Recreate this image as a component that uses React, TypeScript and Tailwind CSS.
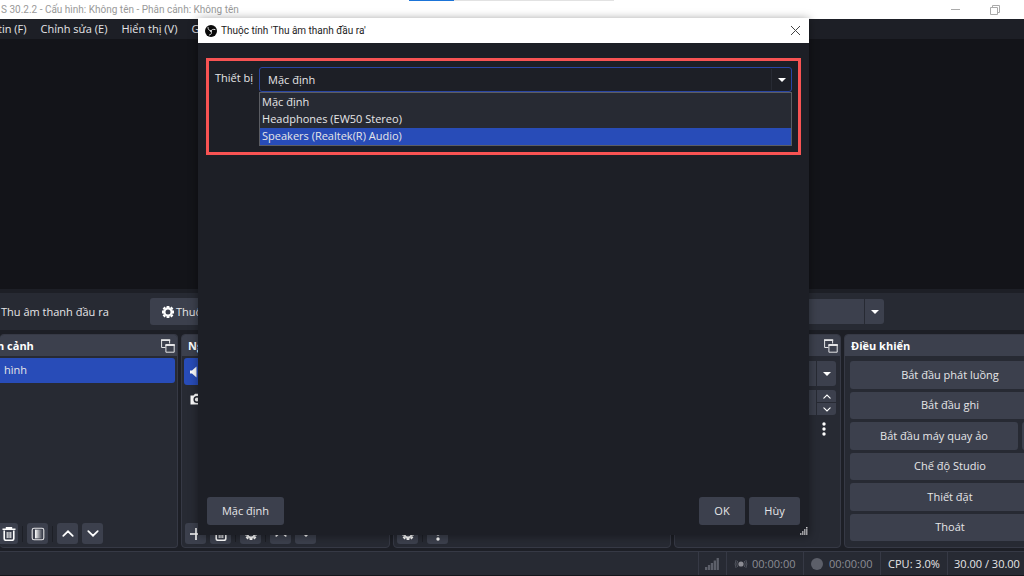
import React from 'react';
import clsx from 'clsx';

const controls = ['Bắt đầu phát luồng', 'Bắt đầu ghi', 'Bắt đầu máy quay ảo', 'Chế độ Studio', 'Thiết đặt', 'Thoát'];
const devices = ['Mặc định', 'Headphones (EW50 Stereo)', 'Speakers (Realtek(R) Audio)'];

function Triangle() {
  return (
    <svg viewBox="0 0 8 4" className="h-1 w-2 shrink-0" fill="#fff" aria-hidden="true">
      <path d="M0 0h8L4 4z" />
    </svg>
  );
}

function Gear({ className }: { className?: string }) {
  return (
    <svg viewBox="0 0 12 12" className={clsx('shrink-0', className)} fill="none" stroke="#fefefe" aria-hidden="true">
      <circle cx="6" cy="6" r="3.6" strokeWidth="2.2" />
      <g strokeWidth="2.8">
        <path d="M6 0v2M6 10v2M0 6h2M10 6h2" />
        <path d="M1.6 1.6l1.3 1.3M9.1 9.1l1.3 1.3M1.6 10.4l1.3-1.3M9.1 2.9l1.3-1.3" />
      </g>
    </svg>
  );
}

function Trash() {
  return (
    <svg viewBox="0 0 14 14" className="size-3.5" fill="none" stroke="#fefefe" aria-hidden="true">
      <path d="M.5 2.2h13M4.5 1.6V.7h5v.9" strokeWidth="1.4" />
      <path d="M2.2 3.5v8q0 1.8 1.8 1.8h6q1.8 0 1.8-1.8v-8" strokeWidth="1.6" />
      <path d="M5.2 5v6M7 5v6M8.8 5v6" strokeWidth="1" />
    </svg>
  );
}

function Filter() {
  return (
    <svg viewBox="0 0 14 14" className="size-3.5" aria-hidden="true">
      <defs>
        <linearGradient id="fade">
          <stop offset="0" stopColor="#fefefe" />
          <stop offset="1" stopColor="#3c404d" />
        </linearGradient>
      </defs>
      <rect x="1.2" y="1.2" width="11.6" height="11.6" rx="1.8" fill="none" stroke="#e4e4e6" strokeWidth="1.1" />
      <rect x="4" y="2.6" width="7.4" height="8.8" fill="url(#fade)" />
    </svg>
  );
}

function Chevron({ down, className }: { down?: boolean; className?: string }) {
  return (
    <svg viewBox="0 0 14 8" className={className} fill="none" stroke="#fefefe" strokeWidth="2" strokeLinecap="round" aria-hidden="true">
      <path d={down ? 'M1.5 1.2L7 6.6l5.5-5.4' : 'M1.5 6.8L7 1.4l5.5 5.4'} />
    </svg>
  );
}

function Plus() {
  return (
    <svg viewBox="0 0 14 14" className="size-3.5" stroke="#fefefe" strokeWidth="1.6" aria-hidden="true">
      <path d="M7 1v12M1 7h12" />
    </svg>
  );
}

function Dots() {
  return (
    <svg viewBox="0 0 4 14" className="h-3.5 w-1" fill="#fefefe" aria-hidden="true">
      <circle cx="2" cy="2" r="1.7" />
      <circle cx="2" cy="7" r="1.7" />
      <circle cx="2" cy="12" r="1.7" />
    </svg>
  );
}

function FloatIcon() {
  return (
    <svg viewBox="0 0 14 14" className="size-3.5 shrink-0" fill="none" stroke="#e4e4e6" aria-hidden="true">
      <path d="M4.5 8.500H.6V1.200h8v3.300" />
      <path d="M0 1.200h9.200" strokeWidth="1.800" />
      <path d="M4.900 6v7.200h8.300V6z" fill="#3c404d" />
      <path d="M4.400 6h9.400" strokeWidth="1.800" />
    </svg>
  );
}

function ObsLogo() {
  return (
    <svg viewBox="0 0 24 24" className="size-3 shrink-0" aria-hidden="true">
      <circle cx="12" cy="12" r="12" fill="#0a0a0a" />
      <g fill="none" stroke="#e0e0e0" strokeWidth="2" strokeLinecap="round">
        <path d="M6 5c0 4 2 6 6 7" />
        <path d="M20 9c-4-1-7 0-8 3" />
        <path d="M9 20c4-1 5-4 3-8" />
      </g>
      <circle cx="12" cy="12" r="1.8" fill="#e0e0e0" />
    </svg>
  );
}

function ToolButton({ label, children }: { label: string; children: React.ReactNode }) {
  return (
    <button type="button" aria-label={label} className="flex size-[21px] shrink-0 items-center justify-center rounded-[3px] bg-[#3c404d]">
      {children}
    </button>
  );
}

function Separator() {
  return <span className="h-4 w-px shrink-0 bg-[#1d1f26]" />;
}

interface DockProps {
  title?: string;
  floatable?: boolean;
  className?: string;
  children: React.ReactNode;
}

function Dock({ title, floatable, className, children }: DockProps) {
  return (
    <section className={clsx('flex flex-col overflow-hidden rounded-sm border border-[#363945] bg-[#272a33]', className)}>
      <header className="flex h-[21px] shrink-0 items-center justify-between bg-[#3c404d] pr-0.5">
        <h2 className="whitespace-nowrap font-bold text-white">{title}</h2>
        {floatable && <FloatIcon />}
      </header>
      {children}
    </section>
  );
}

function PropertiesDialog() {
  return (
    <div
      role="dialog"
      aria-labelledby="dialog-title"
      className="absolute top-[18px] right-[215px] bottom-[41px] left-[198px] flex flex-col bg-[#1d1f26] shadow-[0_1px_9px_rgba(0,0,0,0.4)]"
    >
      <div className="flex h-[25px] shrink-0 items-center gap-1 bg-white pr-2 pl-[7px] text-[#222]">
        <ObsLogo />
        <h1 id="dialog-title" className="flex-1 font-['Roboto','Open_Sans',sans-serif] text-[10px]">Thuộc tính 'Thu âm thanh đầu ra'</h1>
        <button type="button" aria-label="Đóng">
          <svg viewBox="0 0 11 11" className="size-[11px]" stroke="#444" aria-hidden="true">
            <path d="M1 1l9 9M10 1l-9 9" />
          </svg>
        </button>
      </div>

      <div className="flex flex-1 flex-col justify-between px-2 pt-[15px] pb-2.5">
        <div className="flex h-[97px] gap-1.5 border-[3px] border-[#f85353] px-1.5 pt-1.5">
          <label htmlFor="device" className="h-6 shrink-0 pt-px leading-5">Thiết bị</label>
          <div className="flex-1">
            <div className="relative">
              <select id="device" className="block h-[25px] w-full appearance-none rounded-[3px] border border-solid border-[#2945a4] bg-[#1d1f26] pl-2">
                <option>Mặc định</option>
              </select>
              <span className="pointer-events-none absolute inset-y-0.5 right-px flex w-5 items-center justify-center border-l border-[#272a33]">
                <Triangle />
              </span>
            </div>
            <ul role="listbox" aria-label="Thiết bị" className="border border-[#5b5d63] bg-[#272a33] pt-px">
              {devices.map((name, i) => (
                <li
                  key={name}
                  role="option"
                  aria-selected={i === 2}
                  className={clsx('h-[17px] pl-0.5 leading-4', i === 2 && 'bg-[#284cb8]')}
                >
                  {name}
                </li>
              ))}
            </ul>
          </div>
        </div>

        <div className="flex gap-1 px-px">
          <button type="button" className="mr-auto h-7 w-[77px] rounded-[3px] bg-[#3c404d]">Mặc định</button>
          <button type="button" className="h-7 w-[46px] rounded-[3px] bg-[#3c404d]">OK</button>
          <button type="button" className="h-7 w-[51px] rounded-[3px] bg-[#3c404d]">Hùy</button>
        </div>
      </div>

      <svg viewBox="0 0 8 8" className="absolute right-px bottom-0 size-2" fill="#c8c8ca" aria-hidden="true">
        <path d="M6 0h1.500v1.500H6zM4 2.200h1.500v1.500H4zM6 2.200h1.500v1.500H6zM2 4.200h1.500v1.500H2zM4 4.200h1.500v1.500H4zM6 4.200h1.500v1.500H6zM0 6.200h1.500v1.500H0zM2 6.200h1.500v1.500H2zM4 6.200h1.500v1.500H4zM6 6.200h1.500v1.500H6z" />
      </svg>
    </div>
  );
}

export default function App() {
  return (
    <div className="relative flex min-h-screen flex-col overflow-hidden bg-[#1d1f26] font-['Open_Sans','Noto_Sans',sans-serif] text-[11px] leading-4 text-[#e6e6e8]">
      <div className="relative flex h-[19px] items-center justify-between bg-white font-['Roboto','Open_Sans',sans-serif] text-[10px] text-[#999]">
        <span className="pl-px">S 30.2.2 - Cấu hình: Không tên - Phân cảnh: Không tên</span>
        <span className="absolute top-0 left-[409px] flex h-px w-[205px] bg-[#e2e2e2]">
          <span className="w-[45px] bg-[#1b74d8]" />
        </span>
        <div className="flex items-center gap-[30px] pr-6">
          <button type="button" aria-label="Thu nhỏ" className="h-px w-[9px] bg-[#aaa]" />
          <button type="button" aria-label="Khôi phục">
            <svg viewBox="0 0 10 10" className="size-2.5" fill="none" stroke="#aaa" aria-hidden="true">
              <path d="M.5 2.500h7v7h-7zM2.500 2.500v-2h7v7h-2" />
            </svg>
          </button>
        </div>
      </div>

      <nav className="flex h-5 items-center gap-3.5 whitespace-nowrap">
        <a href="#file" className="-ml-0.5">tin (F)</a>
        <a href="#edit">Chỉnh sửa (E)</a>
        <a href="#view">Hiển thị (V)</a>
        <a href="#docks">G</a>
      </nav>

      <main className="flex-1 bg-[#131419]" />

      <div className="mt-1 flex h-[37px] shrink-0 items-center bg-[#272a33]">
        <span className="w-[150px] pl-px">Thu âm thanh đầu ra</span>
        <button type="button" className="flex h-[27px] w-24 items-center gap-0.5 rounded-[3px] bg-[#3c404d] pl-3">
          <Gear className="size-3" />
          Thuộc tính
        </button>
        <button type="button" aria-label="Chọn nguồn" className="mr-[140px] ml-auto flex h-[25px] w-[200px] justify-end rounded-[3px] bg-[#3c404d]">
          <span className="flex h-full w-5 items-center justify-center border-l border-[#272a33]">
            <Triangle />
          </span>
        </button>
      </div>

      <div className="mt-1 flex h-[214px] shrink-0 gap-[3px]">
        <Dock title="n cảnh" floatable className="w-[178px] shrink-0 border-l-0 [&_h2]:-ml-[3px]">
          <ul className="flex-1 py-0.5 pr-0.5">
            <li className="h-[25px] rounded-r-[3px] bg-[#284cb8] pl-1 leading-6">hình</li>
          </ul>
          <div className="flex items-center gap-1 pb-[3px]">
            <button type="button" aria-label="Xóa cảnh" className="flex h-[21px] w-[18px] items-center justify-center rounded-r-[3px] bg-[#3c404d] pr-px">
              <Trash />
            </button>
            <Separator />
            <ToolButton label="Bộ lọc"><Filter /></ToolButton>
            <Separator />
            <ToolButton label="Lên"><Chevron className="h-[7px] w-3" /></ToolButton>
            <ToolButton label="Xuống"><Chevron down className="h-[7px] w-3" /></ToolButton>
          </div>
        </Dock>

        <Dock title="Nguồn" className="w-[209px] shrink-0 [&>header]:pl-1.5">
          <ul className="flex-1 p-0.5">
            <li className="flex h-[27px] items-center rounded-[3px] bg-[#284cb8] pl-1.5">
              <svg viewBox="0 0 12 12" className="size-3" fill="#fefefe" aria-hidden="true">
                <path d="M0 4.500h2L6.500.5v11L2 7.500H0z" />
              </svg>
            </li>
            <li className="flex h-7 items-center pl-1.5">
              <svg viewBox="0 0 14 12" className="h-3 w-3.5" fill="#fefefe" aria-hidden="true">
                <path d="M.5 2.500h3L5 .8h4l1.500 1.700h3v9H.5z" />
                <circle cx="7" cy="6.500" r="2.800" fill="none" stroke="#272a33" strokeWidth="1.500" />
              </svg>
            </li>
          </ul>
          <div className="flex items-center gap-1 pb-[3px] pl-[3px]">
            <ToolButton label="Thêm nguồn"><Plus /></ToolButton>
            <ToolButton label="Xóa nguồn"><Trash /></ToolButton>
            <Separator />
            <ToolButton label="Thuộc tính nguồn"><Gear className="size-3" /></ToolButton>
            <Separator />
            <ToolButton label="Nguồn lên"><Chevron className="h-[7px] w-3" /></ToolButton>
            <ToolButton label="Nguồn xuống"><Chevron down className="h-[7px] w-3" /></ToolButton>
          </div>
        </Dock>

        <Dock className="flex-1">
          <div className="mt-auto flex items-center gap-1 pb-[3px] pl-[3px]">
            <ToolButton label="Cài đặt âm thanh"><Gear className="size-3" /></ToolButton>
            <Separator />
            <ToolButton label="Tùy chọn âm thanh"><Dots /></ToolButton>
          </div>
        </Dock>

        <Dock floatable className="w-[167px] shrink-0">
          <div className="flex flex-col items-end gap-1 pt-[5px] pr-1">
            <button type="button" aria-label="Hiệu ứng chuyển cảnh" className="flex h-[25px] w-full justify-end rounded-[3px] bg-[#3c404d]">
              <span className="flex h-full w-5 items-center justify-center border-l border-[#272a33]">
                <Triangle />
              </span>
            </button>
            <div className="flex h-[25px] w-full justify-end rounded-[3px] bg-[#3c404d]">
              <div className="flex w-5 flex-col border-l border-[#272a33]">
                <button type="button" aria-label="Tăng" className="flex flex-1 items-center justify-center border-b border-[#272a33]">
                  <Chevron className="h-[5px] w-2" />
                </button>
                <button type="button" aria-label="Giảm" className="flex flex-1 items-center justify-center">
                  <Chevron down className="h-[5px] w-2" />
                </button>
              </div>
            </div>
            <button type="button" aria-label="Thêm tùy chọn" className="mt-[3px] mr-2.5">
              <Dots />
            </button>
          </div>
        </Dock>

        <Dock title="Điều khiển" className="-mr-8 w-[212px] shrink-0 [&>header]:pl-1.5">
          <div className="flex flex-1 flex-col gap-[3px] px-[5px] pt-[5px] pb-1.5">
            {controls.map((name, i) => (
              <div key={name} className="flex flex-1 gap-1">
                <button type="button" className="flex-1 rounded-[3px] bg-[#3c404d]">{name}</button>
                {i === 2 && <button type="button" aria-label="Cấu hình máy quay ảo" className="w-7 rounded-[3px] bg-[#3c404d]" />}
              </div>
            ))}
          </div>
        </Dock>
      </div>

      <footer className="mt-[3px] flex h-[25px] shrink-0 justify-end divide-x divide-[#363945] border-t border-b border-t-[#363945] border-b-[#15161b] bg-[#272a33]">
        <span />
        <span className="flex w-7 items-center pl-1.5">
          <svg viewBox="0 0 14 12" className="h-3 w-3.5" fill="#5c5f69" aria-hidden="true">
            <path d="M0 9h2.300v3H0zM2.900 7h2.300v5H2.900zM5.800 5h2.300v7H5.800zM8.700 2.500H11V12H8.700zM11.600 0h2.300v12h-2.300z" />
          </svg>
        </span>
        <span className="flex w-[77px] items-center gap-1 pl-[7px] text-[#8b8c93]">
          <svg viewBox="0 0 14 12" className="h-3 w-3.5" fill="none" stroke="#5c5f69" strokeWidth="0.8" aria-hidden="true">
            <circle cx="7" cy="6" r="2.600" fill="#8b8c93" stroke="none" />
            <path d="M3.600 3q-1.600 3 0 6M10.400 3q1.600 3 0 6M2.100 2q-2 4 0 8M11.900 2q2 4 0 8" />
          </svg>
          00:00:00
        </span>
        <span className="flex w-[77px] items-center gap-1.5 pl-[7px] text-[#8b8c93]">
          <span className="size-3 rounded-full bg-[#5c5f69]" />
          00:00:00
        </span>
        <span className="flex w-[67px] items-center justify-center">CPU: 3.0%</span>
        <span className="flex w-[76px] items-center justify-center pl-0.5">30.00 / 30.00</span>
      </footer>

      <PropertiesDialog />
    </div>
  );
}
